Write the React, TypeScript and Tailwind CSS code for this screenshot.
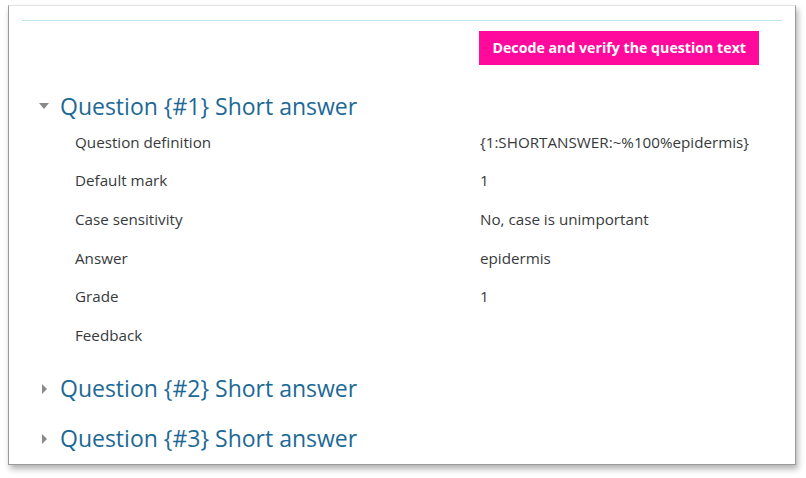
const rows: [string, string][] = [
  ['Question definition', '{1:SHORTANSWER:~%100%epidermis}'],
  ['Default mark', '1'],
  ['Case sensitivity', 'No, case is unimportant'],
  ['Answer', 'epidermis'],
  ['Grade', '1'],
  ['Feedback', ''],
];

function Caret({ open }: { open: boolean }) {
  return (
    <svg width="12" height="12" viewBox="0 0 12 12" className="shrink-0">
      {open ? <polygon points="1,3 11,3 6,9" fill="#8a8a8a" /> : <polygon points="4,1 9,6 4,11" fill="#8a8a8a" />}
    </svg>
  );
}

function QuestionHeading({ n, open }: { n: number; open: boolean }) {
  return (
    <div className="flex h-[40px] items-center gap-[10px] pl-[16px]">
      <Caret open={open} />
      <span className="text-[23px] leading-none text-[#1d6996]">Question {`{#${n}}`} Short answer</span>
    </div>
  );
}

export default function App() {
  return (
    <div className="h-[478px] w-[806px] bg-white pl-[8px] pt-[5px]" style={{ fontFamily: '"Open Sans", "Noto Sans", sans-serif' }}>
      <div className="h-[460px] w-[788px] border border-t-[#e4e4e4] border-x-[#9a9a9a] border-b-[#9a9a9a] bg-white px-[13px] pt-[14px] shadow-[2px_4px_6px_rgba(0,0,0,0.3)]">
        <div className="h-px bg-[#bfe6f2]" />
        <div className="flex justify-end pr-[23px] pt-[10px]">
          <button className="h-[34px] bg-[#ff0a9c] px-[13px] text-[14.2px] font-bold text-white">Decode and verify the question text</button>
        </div>
        <div className="pt-[21px]">
          <QuestionHeading n={1} open />
        </div>
        <div className="-mt-[3px] flex flex-col">
          {rows.map(([label, value]) => (
            <div key={label} className="flex h-[38.6px] items-center text-[15.2px] text-[#373a3c]">
              <div className="w-[458px] pl-[53px]">{label}</div>
              <div>{value}</div>
            </div>
          ))}
        </div>
        <div className="flex flex-col gap-[10px] pt-[14px]">
          <QuestionHeading n={2} open={false} />
          <QuestionHeading n={3} open={false} />
        </div>
      </div>
    </div>
  );
}
